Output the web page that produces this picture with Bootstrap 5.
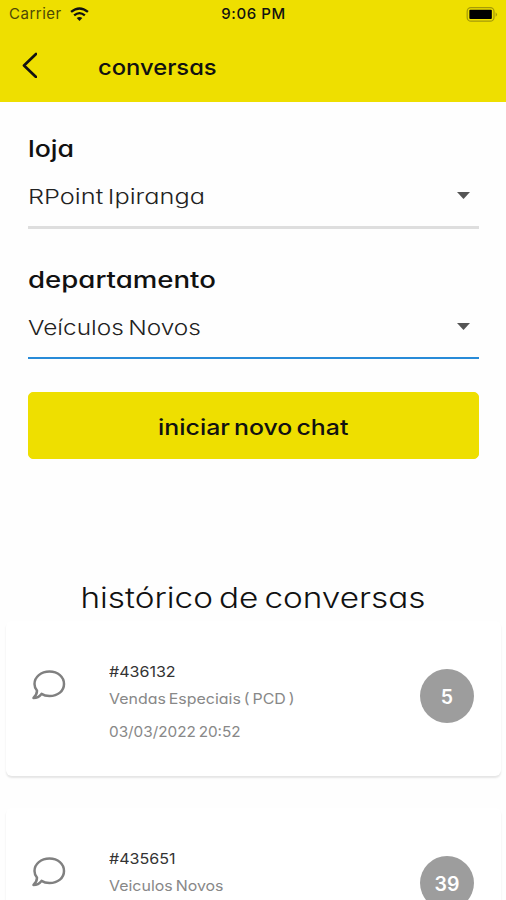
<!DOCTYPE html>
<html lang="pt-BR">
<head>
<meta charset="utf-8">
<meta name="viewport" content="width=device-width, initial-scale=1">
<title>conversas</title>
<link href="https://cdn.jsdelivr.net/npm/bootstrap@5.3.0/dist/css/bootstrap.min.css" rel="stylesheet">
<style>
  body { font-family: Inter, "Liberation Sans", sans-serif; font-feature-settings: "cv11"; color: #111; background: #fefefe; height: 900px; }
  /* extended letterforms */
  .wide { display: inline-block; white-space: nowrap; transform: scaleX(var(--stretch, 1.1)); transform-origin: left center; word-spacing: -.1em; }
  .wide-center { transform-origin: center; }
  .app-head { background: #eedf00; height: 102px; }
  .app-body { height: 798px; }
  .status-bar { height: 28px; font-feature-settings: normal; font-size: 15px; line-height: 28px; padding: 0 8px 0 9px; }
  .status-time { font-weight: 500; letter-spacing: .6px; }
  .carrier { color: #4d4805; letter-spacing: .5px; }
  .head-row { padding: 24px 0 0 22px; gap: 61px; }
  .app-title { font-size: 22px; line-height: 30px; font-weight: 500; --stretch: 1.08; }
  .form-area { padding: 32px 27px 0 28px; }
  .field-name { font-size: 23px; line-height: 30px; font-weight: 500; }
  .field-next { margin-top: 36px; }
  .picker { height: 49px; margin-top: 16px; border-bottom: 3px solid #dedede; font-size: 20.500px; line-height: 34px; color: #222; padding-right: 9px; font-weight: 300; }
  .picker svg { margin-top: 12px; }
  .picker.active-field { border-bottom: 2px solid #288bd8; height: 48px; }
  .btn-start { --bs-btn-bg: #eedf00; --bs-btn-border-color: #eedf00; --bs-btn-color: #111; --bs-btn-hover-bg: #e2d400; --bs-btn-hover-border-color: #e2d400; height: 67px; margin-top: 33px; border-radius: 5px; font-size: 22px; font-weight: 500; padding-top: 10px; --stretch: 1.13; }
  .history-title { font-size: 28px; line-height: 40px; margin: 119px 0 3px; font-weight: 300; text-align: center; --stretch: 1.19; }
  .chat-card { height: 155px; margin: 0 5px 32px 6px; border: 0; border-radius: 6px; background: #fff; box-shadow: 0 2px 2px rgba(0,0,0,.1); padding: 40px 27px 0 26px; }
  .chat-icon { margin: 9px 43px 0 0; }
  .chat-id { font-size: 15px; line-height: 22px; color: #333; --stretch: 1.07; }
  .chat-dept, .chat-date { font-size: 14.500px; line-height: 22px; color: #888; --stretch: 1.1; }
  .chat-dept { margin-top: 5px; }
  .chat-date { margin-top: 11px; --stretch: 1.055; }
  .chat-count { width: 54px; height: 54px; background: #9d9d9d; color: #fff; font-size: 19.500px; font-weight: 600; margin-top: 8px; padding-top: 3px; }
</style>
</head>
<body class="overflow-hidden">
<header class="app-head">
  <div class="status-bar row g-0">
    <div class="col d-flex align-items-center gap-2">
      <span class="carrier">Carrier</span>
      <svg width="19" height="15" viewBox="0 0 20 16" fill="none" stroke="#111" stroke-width="2.500"><path d="M1 5.300Q10-2.200 19 5.300M4.300 8.900Q10 4.100 15.700 8.900"/><path d="M7 11.800Q10 9.300 13 11.800L10 15Z" fill="#111" stroke="none"/></svg>
    </div>
    <div class="col-auto status-time">9:06 PM</div>
    <div class="col d-flex align-items-center justify-content-end">
      <svg width="32" height="15" viewBox="0 0 33 16"><rect x=".7" y=".7" width="28.600" height="14.400" rx="4" fill="none" stroke="#a59b08" stroke-width="1.300"/><rect x="3" y="3" width="24" height="9.800" rx="1" fill="#000"/><path d="M31 5.500Q34 8 31 10.500Z" fill="#a59b08"/></svg>
    </div>
  </div>
  <div class="head-row d-flex align-items-start">
    <svg width="15" height="26" viewBox="0 0 15 26" fill="none" stroke="#111" stroke-width="2.700" stroke-linecap="round" stroke-linejoin="round"><path d="M14 2 2 13.500 14 25"/></svg>
    <span class="app-title wide">conversas</span>
  </div>
</header>
<main class="app-body overflow-hidden">
  <section class="form-area">
    <div class="field-name"><span class="wide" style="--stretch:1.16">loja</span></div>
    <div class="picker d-flex justify-content-between"><span class="wide" style="--stretch:1.235">RPoint Ipiranga</span>
      <svg width="13" height="7" viewBox="0 0 13 7"><path d="M0 0H13L6.500 7Z" fill="#555"/></svg></div>
    <div class="field-name field-next"><span class="wide" style="--stretch:1.2">departamento</span></div>
    <div class="picker active-field d-flex justify-content-between"><span class="wide" style="--stretch:1.19">Veículos Novos</span>
      <svg width="13" height="7" viewBox="0 0 13 7"><path d="M0 0H13L6.500 7Z" fill="#555"/></svg></div>
    <button class="btn btn-start w-100" type="button"><span class="wide wide-center">iniciar novo chat</span></button>
  </section>
  <h1 class="history-title"><span class="wide wide-center">histórico de conversas</span></h1>
  <article class="chat-card card flex-row align-items-start">
    <svg class="chat-icon" width="34" height="30" viewBox="0 0 34 30" fill="none" stroke="#808080" stroke-width="2.500" stroke-linejoin="round"><path d="M17.500 1.500C26 1.500 32 7 32 14S26 26 17.500 26C14 26 11.500 25.200 9.500 23.900 7.500 26.500 5 28 1.500 28 3.500 26 5 23.500 5 20.700 3.200 18.700 2.500 16.500 2.500 14 2.500 7 9 1.500 17.500 1.500Z"/></svg>
    <div class="flex-grow-1">
      <div class="chat-id"><span class="wide">#436132</span></div>
      <div class="chat-dept"><span class="wide">Vendas Especiais ( PCD )</span></div>
      <div class="chat-date"><span class="wide">03/03/2022 20:52</span></div>
    </div>
    <div class="chat-count rounded-circle d-flex align-items-center justify-content-center">5</div>
  </article>
  <article class="chat-card card flex-row align-items-start">
    <svg class="chat-icon" width="34" height="30" viewBox="0 0 34 30" fill="none" stroke="#808080" stroke-width="2.500" stroke-linejoin="round"><path d="M17.500 1.500C26 1.500 32 7 32 14S26 26 17.500 26C14 26 11.500 25.200 9.500 23.900 7.500 26.500 5 28 1.500 28 3.500 26 5 23.500 5 20.700 3.200 18.700 2.500 16.500 2.500 14 2.500 7 9 1.500 17.500 1.500Z"/></svg>
    <div class="flex-grow-1">
      <div class="chat-id"><span class="wide">#435651</span></div>
      <div class="chat-dept"><span class="wide">Veiculos Novos</span></div>
    </div>
    <div class="chat-count rounded-circle d-flex align-items-center justify-content-center">39</div>
  </article>
</main>
<script src="https://cdn.jsdelivr.net/npm/bootstrap@5.3.0/dist/js/bootstrap.bundle.min.js"></script>
</body>
</html>
